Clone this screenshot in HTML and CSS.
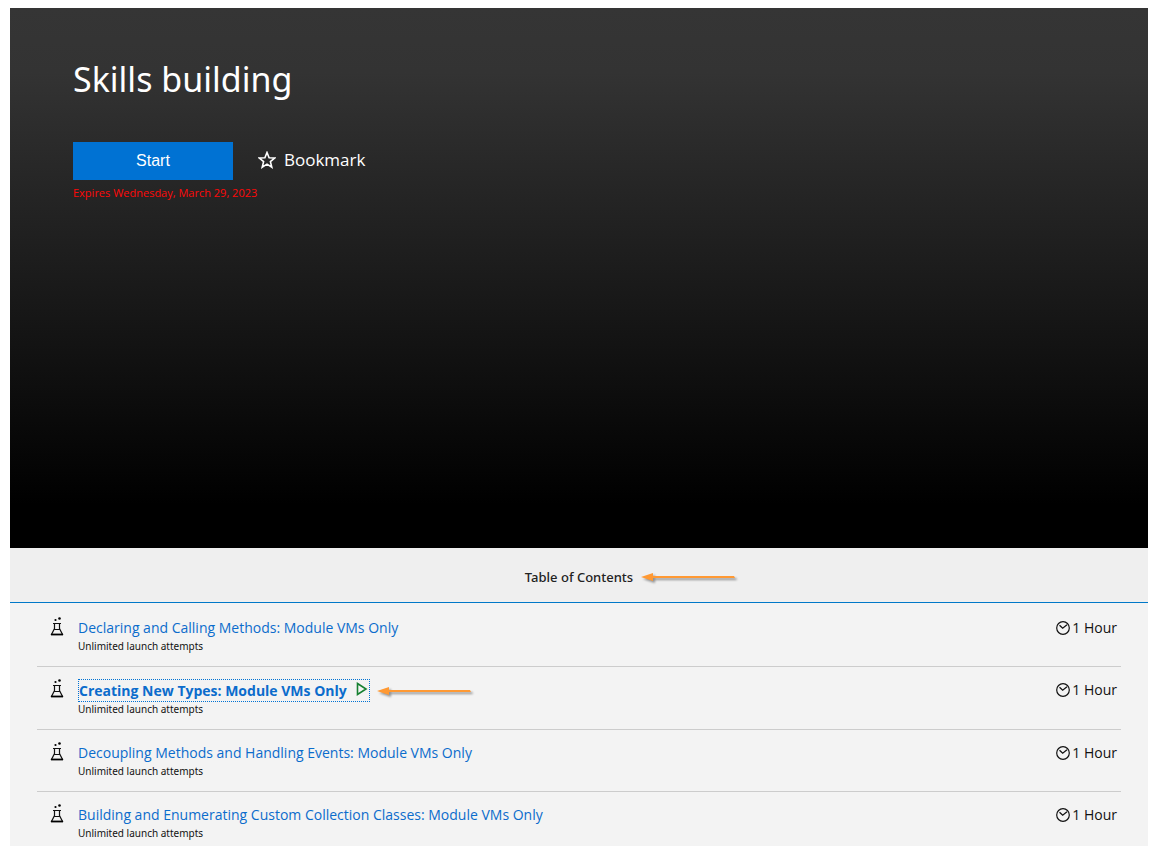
FILE: index.html
```html
<!DOCTYPE html>
<html lang="en">
<head>
<meta charset="utf-8">
<title>Skills building</title>
<link rel="stylesheet" href="styles.css">
</head>
<body>
<svg class="sprite" aria-hidden="true">
  <symbol id="flask" viewBox="0 0 14 20">
    <path d="M3 6.500h8M4.500 6.500v5L1.500 17.500h11L9.500 11.500v-5M4 12.500h6" fill="none" stroke="#111" stroke-width="1.200"/>
    <path d="M1 17.500h12" stroke="#000" stroke-width="1.800"/>
    <circle cx="5.500" cy="3" r="1.100"/><circle cx="9.500" cy="1.500" r="1.300"/>
  </symbol>
  <symbol id="clock" viewBox="0 0 14 14">
    <circle cx="7" cy="7" r="6.300" fill="none" stroke="#111" stroke-width="1.200"/>
    <path d="M3.500 4.200L6.700 7.200L11 3.800" fill="none" stroke="#111" stroke-width="1.300"/>
  </symbol>
  <symbol id="arrow" viewBox="0 0 100 16">
    <path d="M1 7L13 3V6H94L95 8H13V11Z" fill="#ff9933"/>
  </symbol>
</svg>
<main class="course">
  <header class="hero">
    <h1 class="title">Skills building</h1>
    <div class="actions">
      <button class="start" type="button">Start</button>
      <button class="bookmark" type="button">
        <svg class="star" viewBox="0 0 18 18" aria-hidden="true"><path d="M9 1.500L11.100 6.700L16.700 7L12.400 10.600L13.800 16.200L9 13.100L4.200 16.200L5.600 10.600L1.300 7L6.900 6.700Z" fill="none" stroke="#fff" stroke-width="1.600"/></svg>
        Bookmark
      </button>
    </div>
    <p class="expires">Expires Wednesday, March 29, 2023</p>
  </header>
  <div class="tab">
    <h2 class="tab-title">Table of Contents<svg class="arrow" aria-hidden="true"><use href="#arrow"/></svg></h2>
  </div>
  <ul class="list">
    <li class="item">
      <svg class="flask" aria-hidden="true"><use href="#flask"/></svg>
      <div class="info"><a class="link" href="#">Declaring and Calling Methods: Module VMs Only</a><p class="note">Unlimited launch attempts</p></div>
      <span class="time"><svg class="clock" aria-hidden="true"><use href="#clock"/></svg>1 Hour</span>
    </li>
    <li class="item">
      <svg class="flask" aria-hidden="true"><use href="#flask"/></svg>
      <div class="info"><a class="link current" href="#">Creating New Types: Module VMs Only<svg class="play" viewBox="0 0 12 14" aria-hidden="true"><path d="M1.500 1.500L10 7L1.500 12.500Z" fill="none" stroke="#168030" stroke-width="1.600"/></svg><svg class="arrow" aria-hidden="true"><use href="#arrow"/></svg></a><p class="note">Unlimited launch attempts</p></div>
      <span class="time"><svg class="clock" aria-hidden="true"><use href="#clock"/></svg>1 Hour</span>
    </li>
    <li class="item">
      <svg class="flask" aria-hidden="true"><use href="#flask"/></svg>
      <div class="info"><a class="link" href="#">Decoupling Methods and Handling Events: Module VMs Only</a><p class="note">Unlimited launch attempts</p></div>
      <span class="time"><svg class="clock" aria-hidden="true"><use href="#clock"/></svg>1 Hour</span>
    </li>
    <li class="item">
      <svg class="flask" aria-hidden="true"><use href="#flask"/></svg>
      <div class="info"><a class="link" href="#">Building and Enumerating Custom Collection Classes: Module VMs Only</a><p class="note">Unlimited launch attempts</p></div>
      <span class="time"><svg class="clock" aria-hidden="true"><use href="#clock"/></svg>1 Hour</span>
    </li>
  </ul>
</main>
</body>
</html>
```
FILE: styles.css
```css
* { box-sizing: border-box; }
body { margin: 8px 10px 0; background: #fff; color: #111; font-family: "Open Sans", "Noto Sans", sans-serif; }
h1, h2, p, ul { margin: 0; padding: 0; }
button { border: 0; padding: 0; cursor: pointer; }
.sprite { position: absolute; width: 0; height: 0; }
.course { background: #f3f3f3; box-shadow: 0 0 4px rgba(0, 0, 0, .25); }
.hero { min-height: 540px; padding: 46px 63px; background: linear-gradient(#353535 0%, #333 12%, #000 92%); color: #fff; }
.title { font-family: "Noto Sans", sans-serif; font-size: 34px; line-height: 50px; font-weight: 400; }
.actions { display: flex; align-items: center; gap: 25px; margin-top: 38px; }
.start { width: 160px; height: 38px; background: #0072d3; color: #fff; font: 16px "Liberation Sans", sans-serif; }
.bookmark { display: flex; align-items: center; gap: 8px; padding-bottom: 2px; background: none; color: #fff; font: 17px/24px "Open Sans", sans-serif; }
.star { width: 18px; height: 18px; }
.expires { margin-top: 5px; color: #ff0808; font-size: 11px; line-height: 16px; }
.tab { display: flex; justify-content: center; padding: 20px 18px 16px; background: #efefef; border-bottom: 1px solid #0078c8; }
.tab-title { position: relative; font-family: "Noto Sans", sans-serif; font-size: 13px; line-height: 18px; font-weight: 500; color: #222; }
.arrow { position: absolute; left: 100%; top: 50%; width: 100px; height: 16px; margin: -7px 0 0 7px; filter: drop-shadow(2px 2px 1px rgba(0, 0, 0, .4)); }
.list { list-style: none; padding: 2px 27px 0; }
.item { display: flex; align-items: flex-start; padding: 12px 4px 13px 13px; border-bottom: 1px solid #ccc; }
.flask { width: 14px; height: 20px; margin-right: 14px; }
.info { flex: 1; }
.link { display: block; width: fit-content; color: #0b6ccc; font-size: 14px; line-height: 22px; text-decoration: none; }
.current { position: relative; display: flex; font-weight: 700; line-height: 21px; border: 1px dotted #0072d3; }
.play { width: 12px; height: 14px; margin: 2px 1px 0 9px; }
.note { font-family: "Noto Sans", sans-serif; font-size: 10px; line-height: 14px; }
.time { display: flex; align-items: center; gap: 2px; font-size: 14px; line-height: 22px; }
.clock { width: 14px; height: 14px; }
```
